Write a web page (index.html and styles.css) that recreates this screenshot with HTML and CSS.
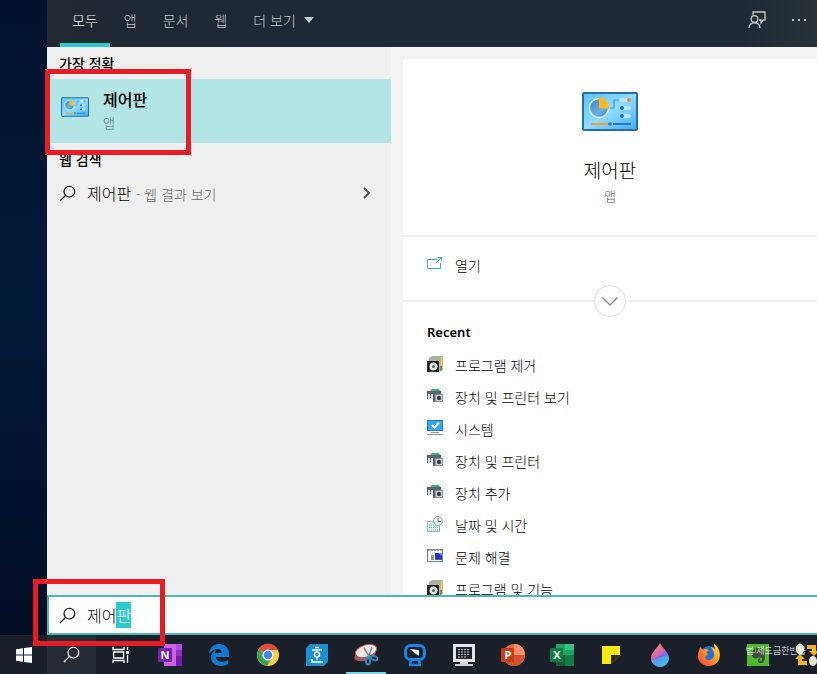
FILE: index.html
```
<!DOCTYPE html>
<html lang="ko">
<head>
    <meta charset="UTF-8">
    <meta name="viewport" content="width=device-width, initial-scale=1.0">
    <title>제어판 - 검색</title>
    <link rel="stylesheet" href="styles.css">
</head>
<body>
    <!-- 공용 아이콘 -->
    <svg class="sprite" aria-hidden="true">
        <defs>
            <linearGradient id="panelFill" x1="0" y1="0" x2="1" y2="1">
                <stop offset="0" stop-color="#5fc0f5"/>
                <stop offset="0.5" stop-color="#8fdcff"/>
                <stop offset="1" stop-color="#48acf0"/>
            </linearGradient>
            <linearGradient id="pieFill" x1="0" y1="0" x2="1" y2="1">
                <stop offset="0" stop-color="#2f86cc"/>
                <stop offset="0.6" stop-color="#6fb0e0"/>
                <stop offset="1" stop-color="#2c7cc2"/>
            </linearGradient>
            <linearGradient id="dropFill" x1="0.2" y1="0" x2="0.8" y2="1">
                <stop offset="0.1" stop-color="#ff8a5c"/>
                <stop offset="0.45" stop-color="#d062b8"/>
                <stop offset="0.6" stop-color="#6a6fe0"/>
                <stop offset="1" stop-color="#3dc4f5"/>
            </linearGradient>
            <linearGradient id="foxFill" x1="1" y1="0" x2="0" y2="1">
                <stop offset="0" stop-color="#ffe83d"/>
                <stop offset="0.5" stop-color="#ff9420"/>
                <stop offset="1" stop-color="#f0323c"/>
            </linearGradient>
        </defs>
        <symbol id="control-panel" viewBox="0 0 56 39">
            <rect x="1" y="1" width="54" height="37" rx="1" fill="url(#panelFill)" stroke="#216fa5" stroke-width="2"/>
            <circle cx="17" cy="16" r="9.500" fill="url(#pieFill)" stroke="#d3f0ff" stroke-width="1.500"/>
            <path d="M17 16V5a11 11 0 0 1 10 12z" fill="#ffb61c"/>
            <path d="M28 16h4V8h5" fill="none" stroke="#3e97d5" stroke-width="1.200"/>
            <rect x="38" y="6" width="11" height="4" rx="2" fill="#b5e5ff"/>
            <rect x="38" y="14" width="11" height="4" rx="2" fill="#b5e5ff"/>
            <rect x="38" y="22" width="11" height="4" rx="2" fill="#b5e5ff"/>
            <circle cx="47" cy="8" r="2" fill="#ed8c36"/>
            <circle cx="40" cy="16" r="2" fill="#1c6cb0"/>
            <circle cx="40" cy="24" r="2" fill="#1c6cb0"/>
            <path d="M9 32h18" stroke="#f0a02c" stroke-width="2"/>
            <path d="M31 32h18" stroke="#207cc4" stroke-width="2"/>
            <circle cx="28" cy="32" r="1.800" fill="#207cc4"/>
        </symbol>
        <symbol id="search" viewBox="0 0 18 18">
            <circle cx="11" cy="7" r="5.700" fill="none" stroke="currentColor" stroke-width="1.200"/>
            <path d="M7 11L1 17" stroke="currentColor" stroke-width="1.300"/>
        </symbol>
        <symbol id="programs" viewBox="0 0 16 16">
            <path d="M2 2l4-2h10v14l-3 2H2z" fill="#c7b67c"/>
            <path d="M2 2l4-2h8v6H2z" fill="#a9afa4"/>
            <path d="M14 1h1.500v11l-1.500 2z" fill="#f1c65a"/>
            <path d="M13 10h2v4l-2 1z" fill="#4f9a7e"/>
            <rect y="5" width="12" height="11" fill="#1d1e20"/>
            <circle cx="6.500" cy="10.500" r="4" fill="#e6e8e7"/>
            <circle cx="6.500" cy="10.500" r="1.500" fill="#555d62"/>
        </symbol>
        <symbol id="devices" viewBox="0 0 16 16">
            <path d="M2 4l3-3h7l2 3z" fill="#2e9fd8"/>
            <path d="M6 1h4v2H6z" fill="#47b55a"/>
            <path d="M0 3h14v3H0z" fill="#5a6268"/>
            <path d="M1 6h5v5H1z" fill="#dce9f2"/>
            <path d="M0 5h1v6H0zM3 6h1v4H3zM6 6h2v8H6z" fill="#59636b"/>
            <rect x="8.500" y="6.500" width="7" height="7" fill="#d3d6da" stroke="#8c8f95"/>
            <circle cx="12" cy="10" r="2.200" fill="#353d50"/>
        </symbol>
        <symbol id="system" viewBox="0 0 16 16">
            <rect x="0.500" y="0.500" width="15" height="10" fill="#35aaf3" stroke="#267bb2"/>
            <path d="M5 5l2.500 2.500L12 2.500" fill="none" stroke="#fff" stroke-width="2"/>
            <path d="M4 12.500h8M0 14.500h16" stroke="#8d989f"/>
        </symbol>
        <symbol id="datetime" viewBox="0 0 16 16">
            <rect x="0.500" y="5.500" width="12" height="10" fill="#e4f5fa" stroke="#93b3c0"/>
            <path d="M2 9h9M2 11.500h9M2 14h9" stroke="#59b5d0" stroke-dasharray="1 1"/>
            <circle cx="11" cy="5" r="4.500" fill="#f2f7f8" stroke="#8ea4ac"/>
            <path d="M11 2v3.500h3" fill="none" stroke="#5b7580"/>
        </symbol>
        <symbol id="trouble" viewBox="0 0 16 16">
            <rect x="0.500" y="1.500" width="15" height="12" fill="#f4f6f8" stroke="#7a828b"/>
            <path d="M1 2.500h14" stroke="#9ba6b5" stroke-dasharray="2 1"/>
            <rect x="8" y="5" width="7" height="6" fill="#2431c4"/>
            <path d="M11 5h4v3z" fill="#6b8df0"/>
            <path d="M4 7h3v5H4z" fill="#8a9a72"/>
            <path d="M8 11.500h7" stroke="#596270"/>
        </symbol>
    </svg>

    <div class="screen">
        <div class="search-window">
            <header class="tabs">
                <nav class="tab-list">
                    <button class="tab active">모두</button>
                    <button class="tab">앱</button>
                    <button class="tab">문서</button>
                    <button class="tab">웹</button>
                    <button class="tab more">더 보기
                        <svg width="10" height="6" viewBox="0 0 10 6"><path d="M0 0h10L5 6z" fill="currentColor"/></svg>
                    </button>
                </nav>
                <div class="tab-actions">
                    <button class="icon-button" aria-label="피드백">
                        <svg width="18" height="18" viewBox="0 0 18 18" fill="none" stroke="currentColor" stroke-width="1.300">
                            <path d="M5 4V1h12v8h-2l-2 3V9h-2"/>
                            <circle cx="6.500" cy="8" r="3.300"/>
                            <path d="M1 17c0-7 11-7 11 0"/>
                        </svg>
                    </button>
                    <button class="icon-button" aria-label="옵션">
                        <svg width="14" height="2" viewBox="0 0 14 2" fill="currentColor"><path d="M0 0h2v2H0zM6 0h2v2H6zM12 0h2v2h-2z"/></svg>
                    </button>
                </div>
            </header>

            <main class="content">
                <section class="results">
                    <h2 class="group-title">가장 정확</h2>
                    <a class="best-match" href="#">
                        <svg class="best-icon"><use href="#control-panel"/></svg>
                        <span class="best-text">
                            <strong>제어판</strong>
                            <small>앱</small>
                        </span>
                    </a>
                    <h2 class="group-title">웹 검색</h2>
                    <a class="web-result" href="#">
                        <svg class="search-icon"><use href="#search"/></svg>
                        <span class="web-text">제어판 <small>- 웹 결과 보기</small></span>
                        <svg width="8" height="12" viewBox="0 0 8 12"><path d="M1 1l5 5-5 5" fill="none" stroke="#555" stroke-width="2"/></svg>
                    </a>
                </section>

                <section class="detail">
                    <div class="app-card">
                        <svg class="app-icon"><use href="#control-panel"/></svg>
                        <h1>제어판</h1>
                        <p>앱</p>
                    </div>
                    <div class="open-row">
                        <a class="detail-link" href="#">
                            <svg width="16" height="16" viewBox="0 0 16 16" fill="none" stroke="#2cb5b2"><path d="M10 3.500H.5v9h13V7M9 7l5.500-5.500M11 1.500h3.500V5"/></svg>
                            열기
                        </a>
                        <button class="expand" aria-label="더 보기">
                            <svg width="16" height="9" viewBox="0 0 16 9"><path d="M0.500 0.500L8 8l7.500-7.500" fill="none" stroke="#858585" stroke-width="1.300"/></svg>
                        </button>
                    </div>
                    <div class="recent">
                        <h2>Recent</h2>
                        <a class="detail-link" href="#"><svg class="small-icon"><use href="#programs"/></svg>프로그램 제거</a>
                        <a class="detail-link" href="#"><svg class="small-icon"><use href="#devices"/></svg>장치 및 프린터 보기</a>
                        <a class="detail-link" href="#"><svg class="small-icon"><use href="#system"/></svg>시스템</a>
                        <a class="detail-link" href="#"><svg class="small-icon"><use href="#devices"/></svg>장치 및 프린터</a>
                        <a class="detail-link" href="#"><svg class="small-icon"><use href="#devices"/></svg>장치 추가</a>
                        <a class="detail-link" href="#"><svg class="small-icon"><use href="#datetime"/></svg>날짜 및 시간</a>
                        <a class="detail-link" href="#"><svg class="small-icon"><use href="#trouble"/></svg>문제 해결</a>
                        <a class="detail-link" href="#"><svg class="small-icon"><use href="#programs"/></svg>프로그램 및 기능</a>
                    </div>
                </section>
            </main>

            <label class="search-box" for="query">
                <svg class="search-icon"><use href="#search"/></svg>
                <input type="text" id="query" value="제어판" aria-label="검색" spellcheck="false" autocomplete="off">
            </label>
        </div>
    </div>

    <footer class="taskbar">
        <button class="task" aria-label="시작">
            <svg width="16" height="16" viewBox="0 0 16 16" fill="#fff"><path d="M0 2.300L7 1.300v6.200H0zM8 1.100L16 0v7.500H8zM0 8.500h7v6.200L0 13.700zM8 8.500h8V16l-8-1.100z"/></svg>
        </button>
        <button class="task pressed" aria-label="검색">
            <svg class="search-icon"><use href="#search"/></svg>
        </button>
        <button class="task" aria-label="작업 보기">
            <svg width="18" height="16" viewBox="0 0 18 16" fill="none" stroke="#fff" stroke-width="1.300"><path d="M1 0v2.500h11V0M1 16v-2.500h11V16M1.600 5h10v6h-10zM15.500 0v3M15.500 8v8"/><path d="M14 4h3v3h-3z" fill="#fff" stroke="none"/></svg>
        </button>
        <button class="task" aria-label="OneNote">
            <svg width="24" height="24" viewBox="0 0 24 24">
                <path d="M6 1h18v22H6z" fill="#ca64ea"/><path d="M18 1h6v6h-6z" fill="#b04be0"/><path d="M18 7h6v6h-6z" fill="#9332bf"/><path d="M18 13h6v10h-6z" fill="#7719aa"/>
                <rect y="5" width="14" height="14" rx="1" fill="#7a1fae"/>
                <text class="tile-letter" x="7" y="16">N</text>
            </svg>
        </button>
        <button class="task" aria-label="Edge">
            <svg width="22" height="22" viewBox="0 0 22 22"><path d="M1 10C2 3 6 0 11 0c6 0 10 4 10 10v3H8c0 6 8 6 12 3v4c-6 4-17 2-17-7 0-3 2-6 5-7-1 1-1 2-1 3h7c0-6-9-5-13 1z" fill="#0f7bd7"/></svg>
        </button>
        <button class="task" aria-label="Chrome">
            <svg width="24" height="24" viewBox="0 0 24 24">
                <circle cx="12" cy="12" r="11" fill="#f9cd3c"/>
                <path d="M12 12L2.500 6.500a11 11 0 0 1 19-0.500L22 7H12z" fill="#de4a3c"/>
                <path d="M12 12L2.500 6.500A11 11 0 0 0 11 23l5-8z" fill="#3ba357"/>
                <circle cx="12" cy="12" r="5.500" fill="#fff"/><circle cx="12" cy="12" r="4.300" fill="#4488ee"/>
            </svg>
        </button>
        <button class="task" aria-label="한글">
            <svg width="22" height="22" viewBox="0 0 22 22">
                <path d="M4 0h18v18l-4 4H0V4z" fill="#1b8fd2"/>
                <path d="M9 3.500h4M6 6h10M6 15v3h11" fill="none" stroke="#fff" stroke-width="1.600"/>
                <circle cx="11" cy="10.500" r="2.500" fill="none" stroke="#fff" stroke-width="1.600"/><path d="M11 13v3" stroke="#fff"/>
            </svg>
        </button>
        <button class="task running" aria-label="캡처 도구">
            <svg width="24" height="24" viewBox="0 0 24 24">
                <ellipse cx="11" cy="12" rx="11" ry="5.500" transform="rotate(-18 11 12)" fill="#9b5f63"/>
                <ellipse cx="12" cy="8" rx="11" ry="6" transform="rotate(-18 12 8)" fill="#f1e8e6" stroke="#c54d4b"/>
                <path d="M10 5l6 10M18 4l-4 11" stroke="#718b98" stroke-width="1.500"/>
                <g fill="none" stroke="#3389bd" stroke-width="2"><ellipse cx="14" cy="18" rx="2" ry="3.500"/><ellipse cx="20" cy="15" rx="3.500" ry="2" transform="rotate(25 20 15)"/></g>
            </svg>
        </button>
        <button class="task" aria-label="원격 지원">
            <svg width="24" height="24" viewBox="0 0 24 24">
                <path d="M8 17l-1 5h10l-1-5" fill="#17202c" stroke="#1685e8" stroke-width="2.500" stroke-linejoin="round"/>
                <rect x="2.500" y="2.500" width="19" height="14" rx="5" fill="#17202c" stroke="#1685e8" stroke-width="3"/>
                <path d="M7 6l9 1v6l-3-2z" fill="#fff"/>
            </svg>
        </button>
        <button class="task" aria-label="터미널">
            <svg width="24" height="24" viewBox="0 0 24 24">
                <rect x="1" y="1" width="22" height="18" fill="#e4e5ec"/>
                <rect x="4" y="4" width="16" height="12" fill="#20242b"/>
                <path d="M6 6.500h12M6 9h12M6 11.500h12M6 14h9" stroke="#c3c6cf" stroke-dasharray="2 1"/>
                <path d="M8 19h8v2H8zM3 21h18v2H3z" fill="#d2d4dc"/>
            </svg>
        </button>
        <button class="task" aria-label="PowerPoint">
            <svg width="24" height="24" viewBox="0 0 24 24">
                <circle cx="13" cy="12" r="11" fill="#ed6c47"/><path d="M13 1a11 11 0 0 1 11 11H13z" fill="#ff8f6b"/><path d="M2 12h22a11 11 0 0 1-22 0z" fill="#d35230"/>
                <rect y="5" width="13" height="14" rx="1" fill="#c43e1c"/>
                <text class="tile-letter" x="7" y="16">P</text>
            </svg>
        </button>
        <button class="task" aria-label="Excel">
            <svg width="24" height="24" viewBox="0 0 24 24">
                <path d="M6 1h9v22H6z" fill="#21a366"/><path d="M15 1h9v6h-9z" fill="#33c481"/><path d="M15 7h9v6h-9z" fill="#21a366"/><path d="M6 12h9v11H6z" fill="#185c37"/><path d="M15 12h9v11h-9z" fill="#107c41"/>
                <rect y="5" width="13" height="14" rx="1" fill="#107c41"/>
                <text class="tile-letter" x="7" y="16">X</text>
            </svg>
        </button>
        <button class="task" aria-label="스티커 메모">
            <svg width="18" height="18" viewBox="0 0 18 18"><path d="M0 0h18v9H9v9H0z" fill="#fde910"/><path d="M10 10h8l-8 8z" fill="#fde910" opacity="0.150"/><path d="M9 18V9h9z" fill="#2c2d25"/></svg>
        </button>
        <button class="task" aria-label="그림판 3D">
            <svg width="20" height="24" viewBox="0 0 20 24"><path d="M10 0c2 5 9 9 9 15a9 9 0 0 1-18 0C1 9 8 5 10 0z" fill="url(#dropFill)"/><path d="M1 17c5 1 8-5 17-4 3 6-3 11-8 11-4 0-8-3-9-7z" fill="#42c0ef" opacity="0.600"/></svg>
        </button>
        <button class="task" aria-label="Firefox">
            <svg width="24" height="24" viewBox="0 0 24 24">
                <circle cx="12" cy="12" r="9" fill="#236fd0"/>
                <path d="M3 4l3 3c2-2 5-1 6 1-3 0-3 2-1 3-1 2-3 2-3 4 3 4 8 2 9-2 1-4-2-6-3-9 2 1 3 1 4 3 0-3-1-4-1-6 9 5 8 22-5 22C4 23-2 15 2 8z" fill="url(#foxFill)"/>
            </svg>
        </button>
        <button class="task" aria-label="Evernote">
            <svg width="22" height="22" viewBox="0 0 22 22">
                <rect width="22" height="22" fill="#50b82d"/>
                <path d="M9 3h3c2 0 2 1 3 2 3 0 3 3 3 6 0 5-1 8-4 8-4 0-4-4-1-5v2c-1 0-1 1 1 1 1 0 1-2 1-3-2 0-3-1-4 0-2 1-6 1-7-5h4c1 0 1-1 1-2z" fill="#434d43"/>
                <path d="M4 8l4-4v4z" fill="#434d43"/>
            </svg>
        </button>
        <button class="task" aria-label="동기화">
            <svg width="24" height="24" viewBox="0 0 24 24">
                <path d="M12 2h9v6h3l-5 5-5-5h3V6h-5zM12 22H3v-6H0l5-5 5 5H7v2h5z" fill="#f2b41e"/>
                <ellipse cx="5" cy="6" rx="4" ry="5.500" fill="#e7e4d6"/><ellipse cx="18" cy="18" rx="4" ry="5" fill="#e7e4d6"/>
            </svg>
        </button>
        <span class="watermark">법 제도금한빈을</span>
    </footer>

    <!-- 강조 표시 -->
    <div class="mark mark-result"></div>
    <div class="mark mark-query"></div>

    <script>
        // 자동 완성된 마지막 글자 선택
        const query = document.getElementById('query');
        query.focus();
        query.setSelectionRange(2, 3);
    </script>
</body>
</html>
```
FILE: styles.css
```
* {
    box-sizing: border-box;
}
body {
    display: flex;
    flex-direction: column;
    height: 100vh;
    margin: 0;
    overflow: hidden;
    position: relative;
    background: linear-gradient(#04122e, #041a3a 45%, #030d22);
    color: #000;
    font-family: "Noto Sans CJK KR", sans-serif;
    font-size: 14px;
    font-weight: 300;
    line-height: 20px;
}
h1, h2, p {
    margin: 0;
}
button {
    border: none;
    padding: 0;
    background: none;
    color: inherit;
    font: inherit;
}
a {
    color: inherit;
    text-decoration: none;
}
svg {
    display: block;
    flex: none;
}
.sprite {
    position: absolute;
    width: 0;
    height: 0;
}
.screen {
    display: flex;
    flex: 1;
    min-height: 0;
    padding-left: 47px;
}
.search-window {
    display: flex;
    flex: 1;
    flex-direction: column;
    min-width: 0;
}

/* 상단 탭 */
.tabs {
    display: flex;
    flex: none;
    justify-content: space-between;
    height: 47px;
    padding: 0 11px 0 13px;
    background: linear-gradient(90deg, #212932, #1d2935 30%, #1d2935 90%, #293238);
    color: #c5c9cd;
}
.tab-list {
    display: flex;
    gap: 2px;
}
.tab {
    padding: 0 12px 3px;
    border-bottom: 4px solid transparent;
}
.tab.active {
    border-bottom-color: #2bcbca;
    color: #fff;
}
.tab.more {
    display: flex;
    align-items: center;
    gap: 8px;
}
.tab-actions {
    display: flex;
    gap: 26px;
    padding-bottom: 7px;
}
.icon-button {
    display: flex;
    align-items: center;
}

/* 검색 결과 */
.content {
    display: flex;
    flex: 1;
    min-height: 0;
    background: #f4f4f4;
}
.results {
    flex: 0 0 344px;
    background: #efefef;
}
.group-title {
    padding: 6px 12px;
    font-size: 14px;
    font-weight: 500;
}
.best-match {
    display: flex;
    gap: 14px;
    height: 64px;
    padding: 10px 14px;
    background: #b3e5e4;
}
.best-icon {
    width: 28px;
    height: 20px;
    margin-top: 8px;
}
.best-text {
    display: flex;
    flex-direction: column;
    gap: 4px;
}
.best-text strong {
    font-size: 16px;
    font-weight: 500;
}
.best-text small {
    color: #527372;
    font-size: 13px;
}
.web-result {
    display: flex;
    align-items: center;
    gap: 11px;
    height: 40px;
    padding: 0 20px 4px 12px;
}
.search-icon {
    width: 17px;
    height: 17px;
}
.web-text {
    flex: 1;
    font-size: 16px;
}
.web-text small {
    color: #666;
    font-size: 14px;
}

/* 상세 패널 */
.detail {
    flex: 1;
    margin: 12px 0 0 12px;
    overflow: hidden;
    background: #fff;
}
.app-card {
    display: flex;
    flex-direction: column;
    align-items: center;
    height: 178px;
    padding-top: 33px;
    border-bottom: 2px solid #f0f0f0;
}
.app-icon {
    width: 56px;
    height: 39px;
}
.app-card h1 {
    margin-top: 25px;
    font-size: 19px;
    font-weight: 300;
    line-height: 28px;
}
.app-card p {
    color: #555;
    font-size: 13px;
    line-height: 24px;
}
.open-row {
    height: 65px;
    padding: 12px 24px 0;
    border-bottom: 2px solid #f0f0f0;
}
.detail-link {
    display: flex;
    align-items: center;
    gap: 12px;
    height: 32px;
}
.detail-link svg {
    margin-bottom: 3px;
}
.expand {
    display: flex;
    align-items: center;
    justify-content: center;
    width: 32px;
    height: 32px;
    margin: 4px auto 0;
    border: 1px solid #dedede;
    border-radius: 50%;
    background: #fff;
}
.recent {
    padding: 20px 24px 0;
}
.recent h2 {
    padding-bottom: 7px;
    font-family: "Noto Sans", sans-serif;
    font-size: 13px;
    font-weight: 600;
}
.small-icon {
    width: 16px;
    height: 16px;
}

/* 검색 입력 */
.search-box {
    display: flex;
    flex: none;
    align-items: center;
    gap: 11px;
    height: 40px;
    padding-left: 10px;
    border: 2px solid #4bb8b5;
    border-right: none;
    background: #fff;
}
.search-box input {
    flex: 1;
    min-width: 0;
    padding: 0;
    border: none;
    outline: none;
    font: inherit;
    font-size: 16px;
    line-height: 26px;
}
.search-box input::selection {
    background: #2bcbca;
    color: #fff;
}

/* 작업 표시줄 */
.taskbar {
    display: flex;
    flex: none;
    height: 39px;
    position: relative;
    background: #1a2029;
    color: #fff;
}
.task {
    display: flex;
    flex: 0 0 49px;
    align-items: center;
    justify-content: center;
    position: relative;
}
.task:first-child {
    flex-basis: 47px;
}
.task.pressed {
    background: #272d37;
}
.task.running::after {
    content: "";
    position: absolute;
    right: 4px;
    bottom: 0;
    left: 5px;
    height: 2px;
    background: #76d5e2;
}
.tile-letter {
    fill: #fff;
    font-family: "Open Sans", sans-serif;
    font-size: 11px;
    font-weight: bold;
    text-anchor: middle;
}
.watermark {
    position: absolute;
    top: 6px;
    right: 11px;
    font-size: 9px;
}

/* 빨간 테두리 */
.mark {
    position: absolute;
    border: 5px solid #e81c25;
    pointer-events: none;
}
.mark-result {
    top: 69px;
    left: 45px;
    width: 146px;
    height: 86px;
}
.mark-query {
    top: 579px;
    left: 33px;
    width: 132px;
    height: 67px;
}
```
